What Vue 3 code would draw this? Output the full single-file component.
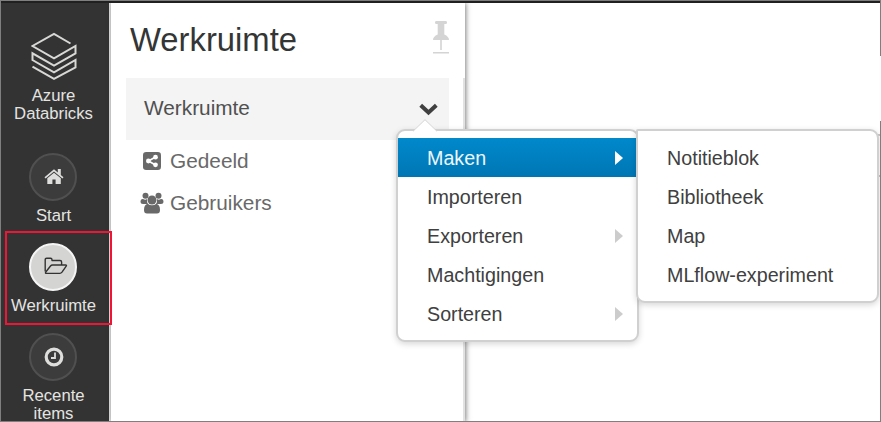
<script setup>
const mainMenu = [
  { label: 'Maken', sub: true, active: true },
  { label: 'Importeren' },
  { label: 'Exporteren', sub: true },
  { label: 'Machtigingen' },
  { label: 'Sorteren', sub: true }
]
const createMenu = ['Notitieblok', 'Bibliotheek', 'Map', 'MLflow-experiment']
</script>

<template>
  <div class="app">
    <nav class="sidebar">
      <a class="brand">
        <svg width="46" height="48" viewBox="0 0 46 48" fill="none" stroke="#d8d8d6" stroke-width="2">
          <path d="M39.500 11.500 23 2 1.500 14 23 26.300 44.500 14V21.300L23 33.500 1.500 21.300V28L23 40.400 44.500 28V35.300L23 46.800 1.500 34.600" />
        </svg>
        <span>Azure<br />Databricks</span>
      </a>
      <a class="nav home">
        <i class="disc">
          <svg width="20" height="17" viewBox="0 0 20 17">
            <path d="M10 1.200 0.500 9.300 1.600 10.500 10 3.600 18.400 10.500 19.500 9.300 16.800 7V1H13.800V4.400Z" fill="#dededc" />
            <path d="M10 4.700 3.300 10.200V16H8.400V11.500H11.600V16H16.800V10.200Z" fill="#dededc" />
          </svg>
        </i>
        <span>Start</span>
      </a>
      <a class="nav work">
        <i class="disc on">
          <svg width="24" height="18" viewBox="0 0 24 18" fill="none" stroke="#333" stroke-width="1.400" stroke-linejoin="round">
            <path d="M1.200 14.500V2.700Q1.200 1.200 2.700 1.200H6.500Q8 1.200 8 2.700V3.500H16Q17.600 3.500 17.600 5V8" />
            <path d="M1.600 15.200 6.500 9Q7.300 8 8.500 8H21.500Q23 8 22.200 9.200L18 15.200Q17.100 16.400 15.800 16.400H2.500Q1 16.400 1.600 15.200Z" />
          </svg>
        </i>
        <span>Werkruimte</span>
      </a>
      <a class="nav recent">
        <i class="disc">
          <svg width="20" height="20" viewBox="0 0 20 20" fill="none" stroke="#dededc">
            <circle cx="10" cy="10" r="7.800" stroke-width="3.200" />
            <path d="M11 5.500V11H7" stroke-width="1.800" />
          </svg>
        </i>
        <span>Recente<br />items</span>
      </a>
    </nav>

    <section class="panel">
      <header class="head">
        <h1>Werkruimte</h1>
        <svg class="pin" width="16" height="33" viewBox="0 0 16 33" fill="#d4d4d4">
          <path d="M3 0H13Q14 0 14 1.500T12.800 3H11.300V13.500Q16 15.500 16 19H0Q0 15.500 4.700 13.500V3H3.200Q2 3 2 1.500T3 0Z" />
          <path d="M7.200 19H8.800V29H7.200ZM0 31H16V32.500H0Z" />
        </svg>
      </header>
      <div class="body">
        <div class="folder">
          <span>Werkruimte</span>
          <svg width="19" height="13" viewBox="0 0 19 13" fill="none" stroke="#404040" stroke-width="4"><path d="M1.700 2.200 9.500 9.500 17.300 2.200" /></svg>
        </div>
        <div class="entry">
          <svg width="24" height="20" viewBox="0 0 24 20">
            <rect x="3" y="1" width="18" height="18" rx="3.200" fill="#696969" />
            <path d="M15.500 6 8.500 10 15.500 14" fill="none" stroke="#fff" stroke-width="1.700" />
            <g fill="#fff"><circle cx="15.500" cy="6.200" r="2.400" /><circle cx="8.400" cy="10" r="2.400" /><circle cx="15.500" cy="13.800" r="2.400" /></g>
          </svg>
          <span>Gedeeld</span>
        </div>
        <div class="entry users">
          <svg width="24" height="22" viewBox="0 0 24 22" fill="#696969">
            <circle cx="5.500" cy="3.700" r="3" /><circle cx="18.500" cy="3.700" r="3" />
            <path d="M3 7Q5.500 8.300 7 7 6.500 10 8 12H3Q.500 12 .500 10 .500 6.800 3 7ZM21 7Q18.500 8.300 17 7 17.500 10 16 12H21Q23.500 12 23.500 10 23.500 6.800 21 7Z" />
            <circle cx="12" cy="8" r="4.500" />
            <path d="M7.700 11.700Q12 15 16.300 11.700 20 12.500 20 18 20 21.500 17 21.500H7Q4 21.500 4 18 4 12.500 7.700 11.700Z" />
          </svg>
          <span>Gebruikers</span>
        </div>
      </div>
    </section>
    <main class="canvas"></main>

    <div class="selection"></div>
    <div class="ghost"></div>
    <div class="menu main-menu">
      <svg class="notch" width="24" height="13" viewBox="0 0 24 13"><path d="M0 12.500 12 .7 24 12.500" fill="#fff" stroke="#d0d0d0" /><path d="M0 13 12 1.500 24 13Z" fill="#fff" /></svg>
      <div v-for="m in mainMenu" :key="m.label" class="item" :class="{ active: m.active }">
        <span>{{ m.label }}</span><i v-if="m.sub" class="arrow"></i>
      </div>
    </div>
    <div class="menu sub-menu">
      <div v-for="label in createMenu" :key="label" class="item"><span>{{ label }}</span></div>
    </div>
    <div class="frame"></div>
    <div class="frame-gap"></div>
  </div>
</template>

<style>
body { margin: 0; overflow: hidden; }
</style>

<style scoped>
* { box-sizing: border-box; }
.app { position: relative; display: flex; width: 881px; height: 422px; padding: 3px 0 0 1px; overflow: hidden; background: #fff; font-family: "Liberation Sans", Arial, sans-serif; color: #404040; }
.sidebar { flex: none; width: 110px; height: 419px; background: #333; border-right: 2px solid #e5e5e5; display: flex; flex-direction: column; color: #e4e4e2; font-size: 16.700px; line-height: 18px; text-align: center; overflow: hidden; }
.brand, .nav { flex: none; display: flex; flex-direction: column; align-items: center; width: 105px; }
.brand { height: 150px; padding-top: 29px; }
.brand span { margin-top: 7px; }
.nav { height: 90px; }
.nav span { margin-top: 6px; white-space: nowrap; }
.disc { flex: none; width: 48px; height: 48px; margin-right: 1px; border-radius: 50%; border: 2px solid #505050; background: #3c3c3c; display: flex; align-items: center; justify-content: center; }
.disc.on { background: #d4d4d2; border-color: #f5f5f5; padding-left: 5px; }
.on svg { margin-top: -2px; }
.home svg { margin-left: 2px; margin-top: -1px; }
.recent svg { margin-left: 2px; margin-top: -1px; }
.panel { flex: none; width: 354px; height: 419px; background: #fff; box-shadow: 1px 0 5px rgba(0,0,0,.5); display: flex; flex-direction: column; }
.head { display: flex; justify-content: space-between; height: 75px; padding: 18px 16px 0 19px; }
h1 { margin: 0; font-size: 32.800px; line-height: 38px; font-weight: 400; color: #333635; }
.body { flex: 1; border-right: 2px solid #e2e2e2; padding: 0 14px 0 15px; }
.folder { height: 62px; padding: 0 11px 2px 18px; display: flex; align-items: center; justify-content: space-between; background: #f4f4f4; font-size: 20.800px; color: #505050; }
.folder svg { margin-top: 3px; }
.entry { display: flex; align-items: center; height: 42px; padding-left: 14px; font-size: 20.800px; color: #696969; gap: 6px; }
.canvas { flex: 1; }
.selection { position: absolute; left: 5px; top: 231px; width: 107px; height: 94px; border: 2px solid #ee1536; }
.menu { position: absolute; width: 243px; padding-top: 7px; background: #fff; border: 2px solid #d0d0d0; border-radius: 9px; box-shadow: 0 2px 6px rgba(0,0,0,.16); font-size: 19.700px; }
.main-menu { left: 396px; top: 129px; height: 213px; }
.sub-menu { left: 636px; top: 129px; height: 174px; border-top-left-radius: 2px; }
.item { height: 39px; padding: 0 14px 0 29px; display: flex; align-items: center; justify-content: space-between; white-space: nowrap; }
.item span { padding-top: 2px; }
.item.active { background: linear-gradient(#0089cc, #0076b4); color: #eef7fb; }
.arrow { border: 7px solid transparent; border-left: 8px solid #ccc; border-right: 0; }
.active .arrow { border-left-color: #fff; }
.notch { position: absolute; left: 15px; top: -12px; }
.ghost { position: absolute; left: 860px; top: 134px; width: 25px; height: 43px; border: 2px solid #c7c7c7; }
.frame { position: absolute; inset: 0; border: 1px solid #7f7f7f; pointer-events: none; box-shadow: inset 0 2px #202020; }
.frame-gap { position: absolute; left: 880px; top: 56px; width: 1px; height: 65px; background: #fff; }
</style>
